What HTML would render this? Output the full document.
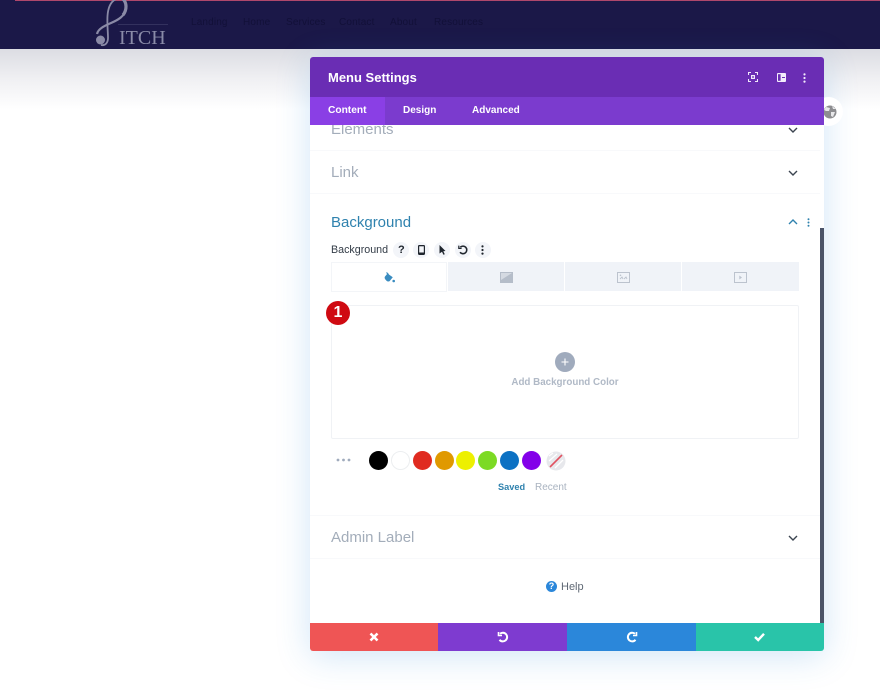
<!DOCTYPE html>
<html><head><meta charset="utf-8">
<style>
*{box-sizing:border-box}
html,body{margin:0;padding:0}
body{width:880px;height:691px;overflow:hidden;background:#fff;position:relative;font-family:"Liberation Sans",sans-serif;filter:blur(.3px)}
.a{position:absolute}
.t{position:absolute;white-space:nowrap;line-height:1}
svg{position:absolute;display:block}
.nav{position:absolute;top:18px;font-size:10px;color:#121038;white-space:nowrap;line-height:1;letter-spacing:.15px}
.h{position:absolute;left:331px;font-size:15px;color:#a3adba;line-height:1;white-space:nowrap}
.sw{position:absolute;top:451px;width:19px;height:19px;border-radius:50%}
.ib{position:absolute;top:242px;width:16px;height:16px;border-radius:50%;background:#f3f5f9}
.tab{position:absolute;top:262px;height:29px;background:#f0f3f8}
.ft{position:absolute;top:623px;height:28px}
</style></head><body>
<div class="a" style="left:0;top:49px;width:880px;height:60px;background:linear-gradient(#dcdde3,#f0f0f3 50%,#fff)"></div>
<div class="a" style="left:0;top:0;width:880px;height:49px;background:#1b1848"></div>
<div class="a" style="left:15px;top:0;width:865px;height:1px;background:#b0476c"></div>

<svg style="left:92px;top:0" width="40" height="48" viewBox="0 0 40 48" fill="none">
<path d="M24 -1C18 2 16 8 15.500 16C15 24 16 32 16 38C16 43 13 46 9 45" stroke="#8a8aa6" stroke-width="1.800"/>
<path d="M24 -2C31 -3 35 2 34 9C33 16 26 20 19 23C12 26 6 29 5 34" stroke="#8a8aa6" stroke-width="2.200"/>
<path d="M31 -1C35 3 35 10 31 15" stroke="#8a8aa6" stroke-width="3.200"/>
<circle cx="8.500" cy="40" r="4.500" fill="#8a8aa6"/>
</svg>
<div class="t" style="left:119px;top:27px;font:20px 'Liberation Serif',serif;color:#8a8ba8">ITCH</div>
<div class="a" style="left:118px;top:24px;width:50px;height:1px;background:#33315e"></div>
<div class="nav" style="left:191px">Landing</div>
<div class="nav" style="left:243px">Home</div>
<div class="nav" style="left:286px">Services</div>
<div class="nav" style="left:339px">Contact</div>
<div class="nav" style="left:390px">About</div>
<div class="nav" style="left:434px">Resources</div>

<div class="a" style="left:310px;top:57px;width:514px;height:594px;background:#fff;border-radius:3px;box-shadow:0 5px 34px rgba(43,135,218,.22)"></div>
<div class="a" style="left:814px;top:97px;width:29px;height:29px;border-radius:50%;background:#fff"></div>
<svg style="left:823px;top:105px" width="14" height="14" viewBox="0 0 14 14"><circle cx="7" cy="7" r="6.500" fill="#8d8d90"/><path d="M3 2L7 3L6 6L3 6L1 5ZM8 7L12 7L10 12L8 11ZM9 1L13 4L10 4Z" fill="#e8e8ea"/></svg>
<div class="a" style="left:310px;top:97px;width:514px;height:526px;background:#fff"></div>

<div class="a" style="left:310px;top:57px;width:514px;height:40px;background:#6a2db4;border-radius:3px 3px 0 0"></div>
<div class="a" style="left:310px;top:97px;width:514px;height:28px;background:#7b3bce"></div>
<div class="a" style="left:310px;top:97px;width:75px;height:28px;background:#8a3fe5"></div>
<div class="t" style="left:328px;top:71px;font-size:13px;font-weight:bold;color:#fff">Menu Settings</div>
<div class="t" style="left:328px;top:106px;font-size:10.200px;font-weight:bold;color:#fff">Content</div>
<div class="t" style="left:403px;top:106px;font-size:10px;font-weight:bold;color:#fff">Design</div>
<div class="t" style="left:472px;top:106px;font-size:10px;font-weight:bold;color:#fff">Advanced</div>

<svg style="left:748px;top:72px" width="10" height="10" viewBox="0 0 10 10" fill="none" stroke="#f0e8fa" stroke-width="1.100"><path d="M0.500 3V.5H3M7 .5H9.500V3M9.500 7V9.500H7M3 9.500H.5V7"/><rect x="3" y="3" width="4" height="4" fill="#f0e8fa" stroke="none"/><rect x="4.200" y="4.200" width="1.600" height="1.600" fill="#6a2db4" stroke="none"/></svg>
<svg style="left:777px;top:73px" width="9" height="9" viewBox="0 0 9 9"><rect width="9" height="9" rx="1" fill="#f3ecfb"/><rect x="1" y="1.200" width="2.600" height="6.600" fill="#6a2db4"/><rect x="5" y="4" width="3" height="1" fill="#6a2db4"/></svg>
<svg style="left:803px;top:73px" width="3" height="10" viewBox="0 0 3 10" fill="#f3ecfb"><circle cx="1.500" cy="1.400" r="1.100"/><circle cx="1.500" cy="5" r="1.100"/><circle cx="1.500" cy="8.600" r="1.100"/></svg>

<div class="a" style="left:310px;top:125px;width:514px;height:12px;overflow:hidden"><div class="h" style="left:21px;top:-3px">Elements</div></div>
<div class="a" style="left:310px;top:150px;width:510px;height:1px;background:#f8f9fb"></div>
<div class="h" style="top:165px">Link</div>
<div class="a" style="left:310px;top:193px;width:510px;height:1px;background:#f8f9fb"></div>
<svg style="left:788px;top:127px" width="10" height="6" viewBox="0 0 10 6" fill="none" stroke="#3b4450" stroke-width="1.400"><path d="M1 1L5 5L9 1"/></svg>
<svg style="left:788px;top:170px" width="10" height="6" viewBox="0 0 10 6" fill="none" stroke="#3b4450" stroke-width="1.400"><path d="M1 1L5 5L9 1"/></svg>

<div class="h" style="top:215px;color:#2f82ae">Background</div>
<svg style="left:788px;top:219px" width="10" height="6" viewBox="0 0 10 6" fill="none" stroke="#2f82ae" stroke-width="1.400"><path d="M1 5L5 1L9 5"/></svg>
<svg style="left:807px;top:218px" width="3" height="9" viewBox="0 0 3 9" fill="#2f82ae"><circle cx="1.500" cy="1.200" r="1"/><circle cx="1.500" cy="4.500" r="1"/><circle cx="1.500" cy="7.800" r="1"/></svg>
<div class="a" style="left:820px;top:228px;width:4px;height:395px;background:#4b5468"></div>

<div class="t" style="left:331px;top:245px;font-size:10.700px;color:#333c47">Background</div>
<div class="ib" style="left:393px"></div><div class="ib" style="left:413px"></div><div class="ib" style="left:434px"></div><div class="ib" style="left:455px"></div><div class="ib" style="left:475px"></div>
<div class="t" style="left:398px;top:245px;font-size:11px;font-weight:bold;color:#20262e">?</div>
<svg style="left:418px;top:245px" width="7" height="10" viewBox="0 0 7 10"><rect width="7" height="10" rx="1.200" fill="#20262e"/><rect x="1.200" y="1.300" width="4.600" height="6.200" fill="#f3f5f9"/></svg>
<svg style="left:439px;top:245px" width="7" height="10" viewBox="0 0 7 10"><path d="M.5 0L6.500 6L4.300 6.200L5.800 9.200L4.400 9.800L3 6.800L.5 8.500Z" fill="#20262e"/></svg>
<svg style="left:458px;top:245px" width="10" height="10" viewBox="0 0 10 10" fill="none" stroke="#20262e" stroke-width="1.600"><path d="M2.300 2.200A3.800 3.800 0 1 1 2 7.300"/><path d="M.8 .6V3.400H3.600" stroke-width="1.200"/></svg>
<svg style="left:481px;top:245px" width="3" height="10" viewBox="0 0 3 10" fill="#20262e"><circle cx="1.500" cy="1.400" r="1.100"/><circle cx="1.500" cy="5" r="1.100"/><circle cx="1.500" cy="8.600" r="1.100"/></svg>

<div class="a" style="left:331px;top:262px;width:116px;height:30px;background:#fff;border:1px solid #f3f5f8"></div>
<div class="tab" style="left:448px;width:116px"></div>
<div class="tab" style="left:565px;width:116px"></div>
<div class="tab" style="left:682px;width:117px"></div>
<svg style="left:384px;top:272px" width="11" height="11" viewBox="0 0 11 11"><path d="M3.500 1.500L8.800 5.300L5.500 9.300C4.500 9.800 3.500 9.500 2.500 8.700L1 7C.5 6 .5 5 1 4.500Z" fill="#3a8cc0"/><path d="M2.500 .5L4.500 2.500" stroke="#3a8cc0" stroke-width="1.200"/><circle cx="9.700" cy="9" r="1.300" fill="#3a8cc0"/></svg>
<svg style="left:500px;top:272px" width="13" height="11" viewBox="0 0 13 11"><rect width="13" height="11" fill="#b5bdc9"/><path d="M1 1H12L1 8Z" fill="#d5dae2"/></svg>
<svg style="left:617px;top:272px" width="13" height="11" viewBox="0 0 13 11" fill="none" stroke="#bcc3ce"><rect x=".5" y=".5" width="12" height="10"/><path d="M3 7L5 5L6 7M7 7L9 5L10 7" stroke-width=".9"/><circle cx="3.500" cy="3.300" r=".8" fill="#bcc3ce" stroke="none"/></svg>
<svg style="left:734px;top:272px" width="13" height="11" viewBox="0 0 13 11" fill="none" stroke="#bcc3ce"><rect x=".5" y=".5" width="12" height="10"/><path d="M5.300 3.500L8 5.500L5.300 7.500Z" fill="#bcc3ce" stroke="none"/></svg>

<div class="a" style="left:331px;top:305px;width:468px;height:134px;border:1px solid #f0f2f5;border-radius:2px"></div>
<div class="a" style="left:326px;top:301px;width:24px;height:24px;border-radius:50%;background:#cf0a12"></div>
<div class="t" style="left:332px;top:305px;font-size:16px;font-weight:bold;color:#fff;width:12px;text-align:center">1</div>

<div class="a" style="left:555px;top:352px;width:20px;height:20px;border-radius:50%;background:#a0abbd"></div>
<svg style="left:560px;top:357px" width="10" height="10" viewBox="0 0 10 10"><path d="M5 1.500V8.500M1.500 5H8.500" stroke="#fff" stroke-width="1.100"/></svg>
<div class="t" style="left:465px;width:200px;text-align:center;top:378px;font-size:9.800px;font-weight:bold;color:#b0b9c6">Add Background Color</div>

<svg style="left:336px;top:458px" width="15" height="4" viewBox="0 0 15 4" fill="#a0abbd"><circle cx="2" cy="2" r="1.400"/><circle cx="7.500" cy="2" r="1.400"/><circle cx="13" cy="2" r="1.400"/></svg>
<div class="sw" style="left:369px;background:#000"></div>
<div class="sw" style="left:391px;background:#fff;border:1px solid #eceef0"></div>
<div class="sw" style="left:413px;background:#e02b20"></div>
<div class="sw" style="left:435px;background:#e09900"></div>
<div class="sw" style="left:456px;background:#edf000"></div>
<div class="sw" style="left:478px;background:#7cda24"></div>
<div class="sw" style="left:500px;background:#0c71c3"></div>
<div class="sw" style="left:522px;background:#8300e9"></div>
<svg style="left:546px;top:451px" width="20" height="20" viewBox="0 0 20 20"><circle cx="10" cy="10" r="9.500" fill="#e7e8ec"/><path d="M3 5L7 2M3 10L11 3M5 15L15 5M9 17L17 9" stroke="#fff" stroke-width="1.300"/><path d="M4 16L16 4" stroke="#e05260" stroke-width="1.600"/></svg>
<div class="t" style="left:498px;top:483px;font-size:9.200px;font-weight:bold;color:#2f82ae">Saved</div>
<div class="t" style="left:535px;top:483px;font-size:10px;color:#a9b3c0">Recent</div>

<div class="a" style="left:310px;top:515px;width:510px;height:1px;background:#f8f9fb"></div>
<div class="h" style="top:530px">Admin Label</div>
<svg style="left:788px;top:535px" width="10" height="6" viewBox="0 0 10 6" fill="none" stroke="#3b4450" stroke-width="1.400"><path d="M1 1L5 5L9 1"/></svg>
<div class="a" style="left:310px;top:558px;width:510px;height:1px;background:#f8f9fb"></div>

<div class="a" style="left:546px;top:581px;width:11px;height:11px;border-radius:50%;background:#2b87da"></div>
<div class="t" style="left:546px;width:11px;text-align:center;top:582px;font-size:9px;font-weight:bold;color:#fff">?</div>
<div class="t" style="left:561px;top:582px;font-size:11px;color:#5f6874">Help</div>

<div class="ft" style="left:310px;width:128px;background:#ef5555;border-radius:0 0 0 3px"></div>
<div class="ft" style="left:438px;width:129px;background:#7e3bd0"></div>
<div class="ft" style="left:567px;width:129px;background:#2b87da"></div>
<div class="ft" style="left:696px;width:128px;background:#29c4a9;border-radius:0 0 3px 0"></div>
<svg style="left:369px;top:632px" width="10" height="10" viewBox="0 0 10 10"><path d="M1.500 1.500L8.500 8.500M8.500 1.500L1.500 8.500" stroke="#fff" stroke-width="2.600"/></svg>
<svg style="left:497px;top:631px" width="12" height="12" viewBox="0 0 12 12" fill="none" stroke="#fff" stroke-width="2"><path d="M3 2.800A4.300 4.300 0 1 1 2.500 8.800"/><path d="M1.500 1V4.500H5" stroke-width="1.600"/></svg>
<svg style="left:626px;top:631px" width="12" height="12" viewBox="0 0 12 12" fill="none" stroke="#fff" stroke-width="2"><path d="M9 2.800A4.300 4.300 0 1 0 9.500 8.800"/><path d="M10.500 1V4.500H7" stroke-width="1.600"/></svg>
<svg style="left:754px;top:632px" width="11" height="10" viewBox="0 0 11 10" fill="none" stroke="#fff" stroke-width="2.400"><path d="M1 5L4.200 8L10 1.800"/></svg>
</body></html>
